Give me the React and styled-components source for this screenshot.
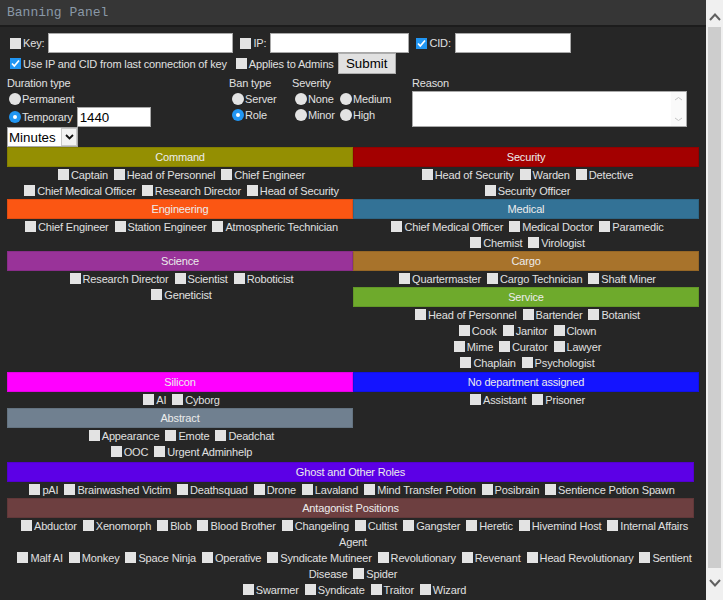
import React from 'react'
import styled, { createGlobalStyle } from 'styled-components'

const GlobalStyle = createGlobalStyle`
  html, body { margin: 0; padding: 0; background: #262626; overflow: hidden; }
  body { font-family: "Liberation Sans", Arial, sans-serif; }
  * { box-sizing: border-box; }
`

const Shell = styled.div`
  display: flex;
  width: 723px;
  height: 600px;
  overflow: hidden;
`

const Main = styled.div`
  width: 706px;
  height: 600px;
  overflow: hidden;
  background: #262626;
  color: #e0e0e0;
  font-size: 11px;
  letter-spacing: -0.15px;
`

const TitleBar = styled.div`
  height: 27px;
  background: #363636;
  border-bottom: 2px solid #1c1c1c;
  color: #8a99a8;
  font-family: "Liberation Mono", "Courier New", monospace;
  font-size: 13px;
  letter-spacing: 0;
  line-height: 25px;
  padding-left: 7px;
`

const Content = styled.div`
  padding: 6px 7px 30px 7px;
`

const Line = styled.div`
  display: flex;
  align-items: center;
  height: ${p => p.$h}px;
`

const CheckLabel = styled.label`
  display: inline-flex;
  align-items: center;
  white-space: nowrap;
  margin-left: ${p => p.$ml || 0}px;
`

const Box = styled.span`
  display: inline-block;
  position: relative;
  width: 11px;
  height: 11px;
  margin: 0 2px 0 3px;
  vertical-align: -1px;
  background: ${p => (p.$on ? '#2196f3' : '#e3e3e3')};
  flex-shrink: 0;

  svg {
    position: absolute;
    left: 0;
    top: 0;
  }
`

const TextInput = styled.input`
  width: ${p => p.$w}px;
  height: 20px;
  margin-left: ${p => p.$ml || 0}px;
  border: 1px solid #a9a9a9;
  background: #fff;
  font-family: "Liberation Sans", Arial, sans-serif;
  font-size: 13.33px;
  color: #000;
  padding: 1px 2px;
  outline: none;
`

const Button = styled.button`
  width: 58px;
  height: 21px;
  margin-left: ${p => p.$ml || 0}px;
  background: #e1e1e1;
  border: 1px solid #adadad;
  font-family: "Liberation Sans", Arial, sans-serif;
  font-size: 13.33px;
  color: #000;
  padding: 0;
`

const Options = styled.div`
  display: flex;
  margin-top: 1px;
`

const Col = styled.div`
  width: ${p => p.$w}px;
  display: flex;
  flex-direction: column;
`

const ColTitle = styled.div`
  height: 16px;
  line-height: 16px;
`

const RadioLine = styled.label`
  display: flex;
  align-items: center;
  height: ${p => p.$h || 16}px;
  white-space: nowrap;
`

const Dot = styled.span`
  position: relative;
  width: 12px;
  height: 12px;
  border-radius: 50%;
  margin: 0 1px 0 ${p => p.$ml ?? 3}px;
  background: ${p => (p.$on ? '#2196f3' : '#e3e3e3')};
  flex-shrink: 0;

  &::after {
    content: '';
    display: ${p => (p.$on ? 'block' : 'none')};
    position: absolute;
    left: 4px;
    top: 4px;
    width: 4px;
    height: 4px;
    border-radius: 50%;
    background: #fff;
  }
`

const SeverityGrid = styled.div`
  display: grid;
  grid-template-columns: 45px auto;
  grid-auto-rows: 16px;
`

const SelectWrap = styled.div`
  display: flex;
  width: 71px;
  height: 20px;
  border: 1px solid #a9a9a9;
  background: #fff;
`

const Select = styled.select`
  appearance: none;
  flex: 1;
  min-width: 0;
  border: none;
  background: transparent;
  font-family: "Liberation Sans", Arial, sans-serif;
  font-size: 13.33px;
  color: #000;
  padding: 0 0 0 1px;
  outline: none;
`

const SelectArrow = styled.span`
  width: 16px;
  display: flex;
  align-items: center;
  justify-content: center;
  border: 1px solid #c9c9c9;
  background: #f2f2f2;
`

const ReasonBox = styled.div`
  display: flex;
  width: 275px;
  height: 36px;
  border: 1px solid #a9a9a9;
  background: #fff;
`

const ReasonText = styled.textarea`
  flex: 1;
  border: none;
  resize: none;
  outline: none;
  font-family: "Liberation Sans", Arial, sans-serif;
  font-size: 13.33px;
`

const FakeScroll = styled.span`
  width: 15px;
  display: flex;
  flex-direction: column;
  justify-content: space-between;
  align-items: center;
  padding: 4px 0;
  background: #fafafa;
`

const DeptGrid = styled.div`
  display: grid;
  grid-template-columns: 346px 346px;
  align-items: start;
`

const Dept = styled.div`
  margin-top: ${p => p.$mt || 0}px;
`

const DeptHead = styled.div`
  height: 20px;
  line-height: 20px;
  width: ${p => (p.$w ? `${p.$w}px` : 'auto')};
  background: ${p => p.$bg};
  color: #ececec;
  text-align: center;
  border: 1px solid rgba(0, 0, 0, 0.1);
  line-height: 18px;
`

const Roles = styled.div`
  width: ${p => (p.$w ? `${p.$w}px` : 'auto')};
  text-align: center;
  line-height: 16px;
`

const Role = styled.label`
  cursor: default;
`

const Scrollbar = styled.div`
  width: 17px;
  height: 600px;
  background: #f0f0f0;
  display: flex;
  flex-direction: column;
`

const ScrollBtn = styled.div`
  height: ${p => p.$h}px;
  padding-top: ${p => p.$pt}px;
  display: flex;
  justify-content: center;
  align-items: flex-start;
`

const Thumb = styled.div`
  flex: 1;
  margin: 0 2px;
  background: #cdcdcd;
`

const Tick = () => (
  <svg width="11" height="11" viewBox="0 0 11 11">
    <polyline points="2,5.5 4.3,8 9,2.5" fill="none" stroke="#fff" strokeWidth="1.7" />
  </svg>
)

const Chevron = ({ up, color = '#606060', w = 12, h = 8, sw = 2 }) => (
  <svg width={w} height={h} viewBox={`0 0 ${w} ${h}`}>
    <polyline
      points={up ? `1,${h - 1} ${w / 2},1.5 ${w - 1},${h - 1}` : `1,1 ${w / 2},${h - 1.5} ${w - 1},1`}
      fill="none"
      stroke={color}
      strokeWidth={sw}
    />
  </svg>
)

const Check = ({ on }) => <Box $on={on}>{on && <Tick />}</Box>

function RoleList({ roles, per = 3, w }) {
  const out = []
  roles.forEach((r, i) => {
    if (i > 0) out.push(i % per === 0 ? <br key={'b' + i} /> : ' ')
    out.push(
      <Role key={r}>
        <Check />
        {r}
      </Role>
    )
  })
  return <Roles $w={w}>{out}</Roles>
}

const Department = ({ name, color, roles, mt }) => (
  <Dept $mt={mt}>
    <DeptHead $bg={color}>{name}</DeptHead>
    <RoleList roles={roles} />
  </Dept>
)

const ghostRoles = ['pAI', 'Brainwashed Victim', 'Deathsquad', 'Drone', 'Lavaland', 'Mind Transfer Potion', 'Posibrain', 'Sentience Potion Spawn']

const antagRoles = [
  'Abductor', 'Xenomorph', 'Blob', 'Blood Brother', 'Changeling', 'Cultist', 'Gangster', 'Heretic', 'Hivemind Host', 'Internal Affairs Agent',
  'Malf AI', 'Monkey', 'Space Ninja', 'Operative', 'Syndicate Mutineer', 'Revolutionary', 'Revenant', 'Head Revolutionary', 'Sentient Disease', 'Spider',
  'Swarmer', 'Syndicate', 'Traitor', 'Wizard',
]

export default function App() {
  return (
    <Shell>
      <GlobalStyle />
      <Main>
        <TitleBar>Banning Panel</TitleBar>
        <Content>
          <Line $h={20}>
            <CheckLabel><Check />Key:</CheckLabel>
            <TextInput $w={185} $ml={4} />
            <CheckLabel $ml={4}><Check />IP:</CheckLabel>
            <TextInput $w={139} $ml={4} />
            <CheckLabel $ml={4}><Check on />CID:</CheckLabel>
            <TextInput $w={116} $ml={4} />
          </Line>
          <Line $h={21}>
            <CheckLabel><Check on />Use IP and CID from last connection of key</CheckLabel>
            <CheckLabel $ml={6}><Check />Applies to Admins</CheckLabel>
            <Button $ml={4}>Submit</Button>
          </Line>

          <Options>
            <Col $w={222}>
              <ColTitle>Duration type</ColTitle>
              <RadioLine><Dot $ml={2} />Permanent</RadioLine>
              <RadioLine $h={20}>
                <Dot $ml={2} $on />Temporary
                <TextInput $w={74} $ml={4} defaultValue="1440" />
              </RadioLine>
              <SelectWrap>
                <Select defaultValue="Minutes">
                  <option>Minutes</option>
                  <option>Hours</option>
                  <option>Days</option>
                </Select>
                <SelectArrow><Chevron color="#111" w={9} h={6} sw={1.8} /></SelectArrow>
              </SelectWrap>
            </Col>
            <Col $w={63}>
              <ColTitle>Ban type</ColTitle>
              <RadioLine><Dot />Server</RadioLine>
              <RadioLine><Dot $on />Role</RadioLine>
            </Col>
            <Col $w={120}>
              <ColTitle>Severity</ColTitle>
              <SeverityGrid>
                <RadioLine><Dot />None</RadioLine>
                <RadioLine><Dot />Medium</RadioLine>
                <RadioLine><Dot />Minor</RadioLine>
                <RadioLine><Dot />High</RadioLine>
              </SeverityGrid>
            </Col>
            <Col $w={275}>
              <ColTitle>Reason</ColTitle>
              <ReasonBox>
                <ReasonText />
                <FakeScroll>
                  <Chevron up color="#c4c4c4" w={9} h={5} sw={1} />
                  <Chevron color="#c4c4c4" w={9} h={5} sw={1} />
                </FakeScroll>
              </ReasonBox>
            </Col>
          </Options>

          <DeptGrid>
            <Department name="Command" color="#948f02" roles={['Captain', 'Head of Personnel', 'Chief Engineer', 'Chief Medical Officer', 'Research Director', 'Head of Security']} />
            <Department name="Security" color="#a30000" roles={['Head of Security', 'Warden', 'Detective', 'Security Officer']} />
            <Department name="Engineering" color="#fb5613" roles={['Chief Engineer', 'Station Engineer', 'Atmospheric Technician']} />
            <Department name="Medical" color="#337296" roles={['Chief Medical Officer', 'Medical Doctor', 'Paramedic', 'Chemist', 'Virologist']} />
            <Department name="Science" color="#993399" roles={['Research Director', 'Scientist', 'Roboticist', 'Geneticist']} />
            <div>
              <Department name="Cargo" color="#a8732b" roles={['Quartermaster', 'Cargo Technician', 'Shaft Miner']} />
              <Department name="Service" color="#6eaa2c" roles={['Head of Personnel', 'Bartender', 'Botanist', 'Cook', 'Janitor', 'Clown', 'Mime', 'Curator', 'Lawyer', 'Chaplain', 'Psychologist']} />
            </div>
            <Department name="Silicon" color="#ff00ff" roles={['AI', 'Cyborg']} mt={1} />
            <Department name="No department assigned" color="#1414ff" roles={['Assistant', 'Prisoner']} mt={1} />
            <Department name="Abstract" color="#708090" roles={['Appearance', 'Emote', 'Deadchat', 'OOC', 'Urgent Adminhelp']} />
          </DeptGrid>

          <Dept $mt={2}>
            <DeptHead $bg="#5c00e6" $w={687}>Ghost and Other Roles</DeptHead>
            <RoleList roles={ghostRoles} per={10} w={687} />
          </Dept>
          <Dept>
            <DeptHead $bg="#6d3f40" $w={687}>Antagonist Positions</DeptHead>
            <RoleList roles={antagRoles} per={10} w={692} />
          </Dept>
        </Content>
      </Main>
      <Scrollbar>
        <ScrollBtn $h={27} $pt={13}><Chevron up /></ScrollBtn>
        <Thumb />
        <ScrollBtn $h={32} $pt={11}><Chevron /></ScrollBtn>
      </Scrollbar>
    </Shell>
  )
}
